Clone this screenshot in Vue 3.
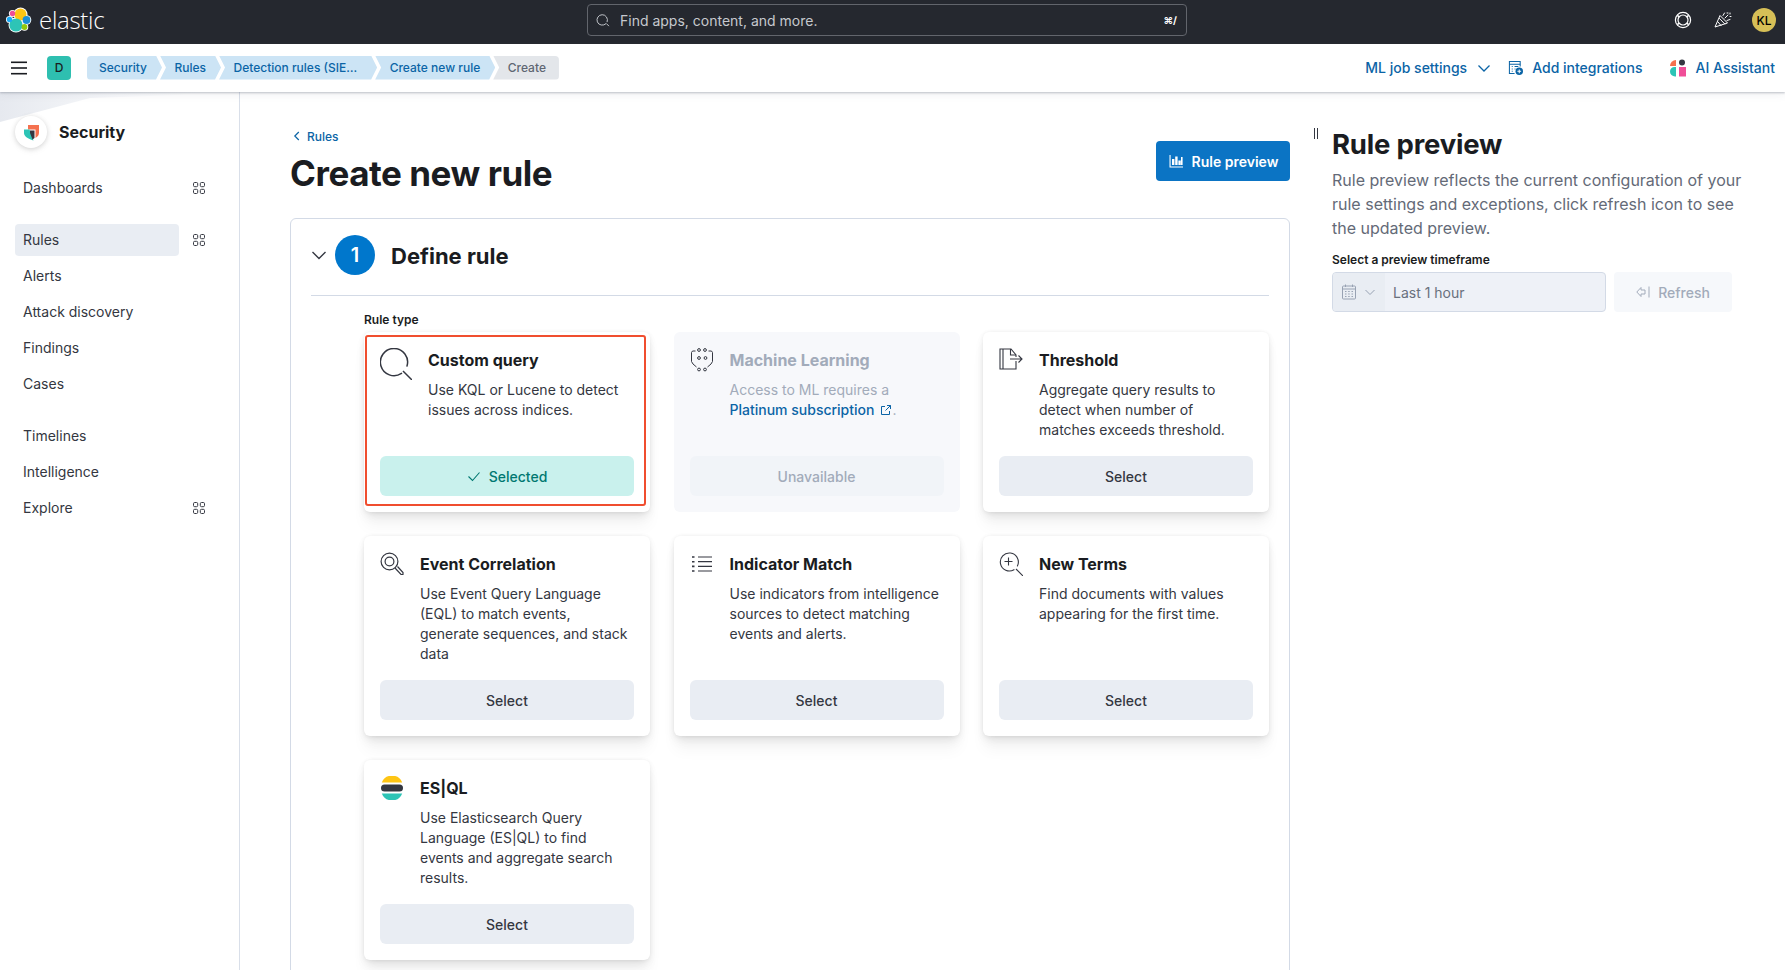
<script setup>
const crumbs = [
  { label: 'Security' },
  { label: 'Rules' },
  { label: 'Detection rules (SIE…', wide: true },
  { label: 'Create new rule' },
  { label: 'Create', last: true },
]
const navTop = [{ label: 'Dashboards', grid: true, cls: 'gapped' }, { label: 'Rules', grid: true, active: true }]
const navMid = ['Alerts', 'Attack discovery', 'Findings', 'Cases']
const navBottom = [{ label: 'Timelines' }, { label: 'Intelligence' }, { label: 'Explore', grid: true }]
const row2 = [
  { key: 'eql', title: 'Event Correlation', desc: 'Use Event Query Language (EQL) to match events, generate sequences, and stack data' },
  { key: 'indicator', title: 'Indicator Match', desc: 'Use indicators from intelligence sources to detect matching events and alerts.' },
  { key: 'terms', title: 'New Terms', desc: 'Find documents with values appearing for the first time.' },
]
</script>

<template>
  <div class="app">
    <header class="topbar">
      <div class="brand">
        <svg class="logo" width="26" height="26" viewBox="0 0 26 26">
          <g fill="#fff">
            <circle cx="14.5" cy="7.5" r="7" /><circle cx="10" cy="18" r="7.5" /><circle cx="6.5" cy="6.5" r="3.6" />
            <circle cx="20.5" cy="13" r="4.8" /><circle cx="3.5" cy="12.5" r="3.6" /><circle cx="18.5" cy="20" r="3.8" />
          </g>
          <circle cx="14.5" cy="7.5" r="6" fill="#fec514" />
          <circle cx="10" cy="18" r="6.6" fill="#2dc4b6" />
          <circle cx="6.5" cy="6.5" r="2.7" fill="#f04e98" />
          <circle cx="20.5" cy="13" r="3.9" fill="#1b8fd8" />
          <circle cx="3.5" cy="12.5" r="2.7" fill="#1ba9f5" />
          <circle cx="18.5" cy="20" r="2.9" fill="#93c90e" />
        </svg>
        <span class="wordmark">elastic</span>
      </div>
      <div class="search">
        <svg width="14" height="14" viewBox="0 0 16 16" fill="none" stroke="#c6c9ce" stroke-width="1.1">
          <path d="M11.2 12.4A6 6 0 1 1 12.8 10" stroke-linecap="round" /><path d="M11.8 12 14.8 15" />
        </svg>
        <span class="search-text">Find apps, content, and more.</span>
        <span class="shortcut">⌘/</span>
      </div>
      <div class="top-icons">
        <svg width="18" height="18" viewBox="0 0 18 18" fill="none" stroke="#fff" stroke-width="1.2">
          <circle cx="9" cy="9" r="7.6" /><circle cx="9" cy="9" r="5" />
          <path d="M3.4 4.4 5.2 6M14.6 4.4 12.8 6M3.4 13.6 5.2 12M14.6 13.6 12.8 12" stroke-width="1.6" />
        </svg>
        <svg width="18" height="18" viewBox="0 0 18 18" fill="none" stroke="#fff" stroke-width="1">
          <path d="M1 16 6 4.5l7.5 7.5Z" stroke-linejoin="round" />
          <path d="M3.6 10.5 7.4 15M5.2 7.2l5.8 6" />
          <path d="M9 4.5 10.5 2M11 7l3-3M13 9.5l3-1M13 2h1M16 2v1M16 5.5h1" stroke-linecap="round" />
        </svg>
        <span class="avatar">KL</span>
      </div>
    </header>

    <div class="subbar">
      <svg class="burger" width="16" height="14" viewBox="0 0 16 14" fill="#1a1c21">
        <rect y="0.5" width="16" height="1.6" /><rect y="6.2" width="16" height="1.6" /><rect y="11.9" width="16" height="1.6" />
      </svg>
      <span class="space-badge">D</span>
      <nav class="crumbs">
        <span v-for="(c, i) in crumbs" :key="c.label" class="crumb" :class="{ first: i === 0, last: c.last, wide: c.wide }">{{ c.label }}</span>
      </nav>
      <div class="actions">
        <span class="action">ML job settings
          <svg class="after-chevron" width="14" height="14" viewBox="0 0 14 14" fill="none" stroke="#0b64a6" stroke-width="1.3"><path d="M1.5 4.5 7 10l5.5-5.5" /></svg>
        </span>
        <span class="action tight">
          <svg width="15" height="15" viewBox="0 0 16 16" fill="none" stroke="#0b64a6" stroke-width="1.1">
            <path d="M13 7V1.5H1.5v13H7" /><path d="M1.5 4.5H13M4 7h1M7 7h4M4 9.5h1M7 9.5h1M4 12h1" />
            <circle cx="12" cy="12" r="4" fill="#0b64a6" stroke="none" /><path d="M12 10v4M10 12h4" stroke="#fff" />
          </svg>
          Add integrations
        </span>
        <span class="action ai">
          <svg width="16" height="18" viewBox="0 0 16 18">
            <path d="M0 7A6 6 0 0 1 6 1v6Z" fill="#f5714f" />
            <circle cx="12" cy="3.4" r="3" fill="#343741" />
            <path d="M6 8v9.5H5A5 5 0 0 1 0 12.5 4.5 4.5 0 0 1 4.5 8Z" fill="#2dc4b6" />
            <rect x="9" y="8" width="7" height="9.5" fill="#f04e98" />
          </svg>
          AI Assistant
        </span>
      </div>
    </div>

    <div class="body">
      <aside class="sidebar">
        <div class="wedge"></div>
        <div class="solution">
          <span class="solution-logo">
            <svg width="15" height="17" viewBox="0 0 15 17">
              <path d="M4 1H15v7.5c0 2.5-1 4-3.5 5.5V5.5H4Z" fill="#f5714f" />
              <path d="M0 5.5h5.5L9.5 16.5c-.5 0-1-.2-1.6-.5C3 14 0 12 0 9Z" fill="#2dc4b6" />
              <path d="M6 6.5h4.5v7.5l-2 1.5L6 9Z" fill="#343741" />
            </svg>
          </span>
          <span class="solution-name">Security</span>
        </div>
        <div v-for="item in navTop" :key="item.label" class="nav-row" :class="item.cls">
          <span class="nav-item" :class="{ active: item.active }">{{ item.label }}</span>
          <svg class="grid-icon" width="12" height="12" viewBox="0 0 12 12" fill="none" stroke="#343741" stroke-width="1">
            <rect x=".5" y=".5" width="4.2" height="4.2" rx="1.2" /><rect x="7.3" y=".5" width="4.2" height="4.2" rx="1.2" />
            <rect x=".5" y="7.3" width="4.2" height="4.2" rx="1.2" /><rect x="7.3" y="7.3" width="4.2" height="4.2" rx="1.2" />
          </svg>
        </div>
        <div v-for="label in navMid" :key="label" class="nav-row"><span class="nav-item">{{ label }}</span></div>
        <div class="nav-spacer"></div>
        <div v-for="item in navBottom" :key="item.label" class="nav-row">
          <span class="nav-item">{{ item.label }}</span>
          <svg v-if="item.grid" class="grid-icon" width="12" height="12" viewBox="0 0 12 12" fill="none" stroke="#343741" stroke-width="1">
            <rect x=".5" y=".5" width="4.2" height="4.2" rx="1.2" /><rect x="7.3" y=".5" width="4.2" height="4.2" rx="1.2" />
            <rect x=".5" y="7.3" width="4.2" height="4.2" rx="1.2" /><rect x="7.3" y="7.3" width="4.2" height="4.2" rx="1.2" />
          </svg>
        </div>
      </aside>

      <main class="main">
        <div class="page-head">
          <div>
            <a class="back">
              <svg width="12" height="12" viewBox="0 0 12 12" fill="none" stroke="#0b64a6" stroke-width="1.2"><path d="M7.8 2 3.8 6l4 4" /></svg>
              Rules
            </a>
            <h1 class="page-title">Create new rule</h1>
          </div>
          <button class="preview-btn">
            <svg width="16" height="16" viewBox="0 0 16 16" fill="#fff">
              <path d="M1.5 2v12.5H15v-1.1H2.6V2Z" /><rect x="4" y="6" width="2.4" height="6" /><rect x="7.2" y="3.5" width="2.4" height="8.5" />
              <rect x="10.4" y="7.5" width="2.4" height="4.5" /><rect x="13" y="4" width="1.6" height="8" />
            </svg>
            Rule preview
          </button>
        </div>

        <section class="panel">
          <div class="step-head">
            <svg width="16" height="16" viewBox="0 0 16 16" fill="none" stroke="#343741" stroke-width="1.4"><path d="M1.5 5 8 11.5 14.5 5" /></svg>
            <span class="step-num">1</span>
            <h2 class="step-title">Define rule</h2>
          </div>
          <div class="step-body">
            <div class="field-label">Rule type</div>
            <div class="cards">
              <article class="card">
                <div class="card-main">
                  <svg class="icon-l" width="32" height="32" viewBox="0 0 32 32" fill="none" stroke="#343741" stroke-width="1.5">
                    <path d="M21.5 25.4A13.6 13.6 0 1 1 27 18" stroke-linecap="round" /><path d="M23 23 32 32" />
                  </svg>
                  <div class="card-copy">
                    <h3 class="card-title">Custom query</h3>
                    <p class="card-desc">Use KQL or Lucene to detect issues across indices.</p>
                  </div>
                </div>
                <div class="card-btn selected">
                  <svg width="14" height="14" viewBox="0 0 14 14" fill="none" stroke="#007871" stroke-width="1.1"><path d="M1.5 7.5 5.5 11.5 12.5 3.5" /></svg>
                  Selected
                </div>
                <span class="annotation"></span>
              </article>

              <article class="card disabled">
                <div class="card-main">
                  <svg width="24" height="24" viewBox="0 0 24 24" fill="none" stroke="#343741" stroke-width="1">
                    <circle cx="9" cy="2" r="1.4" /><circle cx="15" cy="2" r="1.4" /><circle cx="9" cy="10" r="1.4" /><circle cx="15.5" cy="10" r="1.4" />
                    <circle cx="9" cy="21.5" r="1.4" /><circle cx="15" cy="21.5" r="1.4" />
                    <path d="M5.5 3H2.5L1.5 4.5v9L3 16l3.5 3M18.5 3h3l1 1.5v9L21 16l-3.5 3" />
                  </svg>
                  <div class="card-copy">
                    <h3 class="card-title">Machine Learning</h3>
                    <p class="card-desc">Access to ML requires a <a class="link">Platinum subscription<svg class="ext" width="12" height="12" viewBox="0 0 12 12" fill="none" stroke="#0b64a6" stroke-width="1"><path d="M5 2.5H1.5v8h8V7M7 1.5h3.5V5M10.5 1.5 5.5 6.5" /></svg></a>.</p>
                  </div>
                </div>
                <div class="card-btn unavailable">Unavailable</div>
              </article>

              <article class="card">
                <div class="card-main">
                  <svg width="24" height="24" viewBox="0 0 24 24" fill="none" stroke="#343741" stroke-width="1.1">
                    <path d="M17 13v8H1V1h11l5 6v2" /><path d="M4 1v20M11.5 1v6H17" /><path d="M11 11h12M19.5 7.5 23 11l-3.5 3.5" />
                  </svg>
                  <div class="card-copy">
                    <h3 class="card-title">Threshold</h3>
                    <p class="card-desc">Aggregate query results to detect when number of matches exceeds threshold.</p>
                  </div>
                </div>
                <div class="card-btn">Select</div>
              </article>

              <article v-for="c in row2" :key="c.key" class="card">
                <div class="card-main">
                  <svg v-if="c.key === 'eql'" width="24" height="24" viewBox="0 0 24 24" fill="none" stroke="#343741" stroke-width="1.2">
                    <circle cx="9.5" cy="9.5" r="8.4" /><circle cx="9.5" cy="9.5" r="4.4" />
                    <path d="M15 16 21 22.5H23.5M17.5 14.5 23 20.5v2" />
                  </svg>
                  <svg v-else-if="c.key === 'indicator'" width="24" height="24" viewBox="0 0 24 24" fill="none" stroke="#343741" stroke-width="1.2">
                    <path d="M8 5h14M8 9.7h14M8 14.4h14M8 19h14" />
                    <path d="M2 5h2.5M2 9.7h2.5M2 14.4h2.5M2 19h2.5" stroke-width="1.6" />
                  </svg>
                  <svg v-else width="24" height="24" viewBox="0 0 24 24" fill="none" stroke="#343741" stroke-width="1.1">
                    <path d="M15 17.7A9 9 0 1 1 18.4 14" stroke-linecap="round" /><path d="M17 17l7 7M9.5 5.5v8M5.5 9.5h8" />
                  </svg>
                  <div class="card-copy">
                    <h3 class="card-title">{{ c.title }}</h3>
                    <p class="card-desc">{{ c.desc }}</p>
                  </div>
                </div>
                <div class="card-btn">Select</div>
              </article>

              <article class="card">
                <div class="card-main">
                  <svg width="24" height="24" viewBox="0 0 24 24">
                    <path d="M1.8 6.5A11 11 0 0 1 22.2 6.5Z" fill="#fec514" />
                    <rect x="1" y="8.5" width="22" height="7" rx="3.5" fill="#343741" />
                    <path d="M1.8 17.5h20.4a11 11 0 0 1-20.4 0Z" fill="#2dc4b6" />
                  </svg>
                  <div class="card-copy">
                    <h3 class="card-title">ES|QL</h3>
                    <p class="card-desc">Use Elasticsearch Query Language (ES|QL) to find events and aggregate search results.</p>
                  </div>
                </div>
                <div class="card-btn">Select</div>
              </article>
            </div>
          </div>
        </section>
      </main>

      <aside class="preview">
        <span class="handle"></span>
        <h2 class="preview-title">Rule preview</h2>
        <p class="preview-desc">Rule preview reflects the current configuration of your rule settings and exceptions, click refresh icon to see the updated preview.</p>
        <div class="preview-label">Select a preview timeframe</div>
        <div class="preview-controls">
          <div class="timeframe">
            <span class="prepend">
              <svg width="14" height="16" viewBox="0 0 14 16" fill="none" stroke="#98a2b3" stroke-width="1">
                <rect x=".5" y="2" width="13" height="13" rx="1" /><path d="M.5 5h13M3.5 .5V3M10.5 .5V3" />
                <path d="M3 7.5h1.5M6.2 7.5h1.5M9.5 7.5H11M3 10h1.5M6.2 10h1.5M9.5 10H11M3 12.5h1.5M6.2 12.5h1.5M9.5 12.5H11" />
              </svg>
              <svg width="12" height="12" viewBox="0 0 12 12" fill="none" stroke="#98a2b3" stroke-width="1"><path d="M1.5 4 6 8.5 10.5 4" /></svg>
            </span>
            <span class="timeframe-value">Last 1 hour</span>
          </div>
          <div class="refresh">
            <svg width="14" height="12" viewBox="0 0 14 12" fill="none" stroke="#a2abba" stroke-width="1">
              <path d="M9 4H5V1.5L.8 6 5 10.5V8h4ZM13 .5v11" />
            </svg>
            Refresh
          </div>
        </div>
      </aside>
    </div>
  </div>
</template>

<style>
html, body { margin: 0; overflow: hidden; background: #fff; }
</style>

<style scoped>
.app { height: 970px; width: 1785px; display: flex; flex-direction: column; overflow: hidden; font-family: Inter, "Liberation Sans", sans-serif; color: #343741; }

.topbar { height: 44px; flex: none; background: #25282f; display: flex; align-items: center; position: relative; }
.brand { display: flex; align-items: center; width: 587px; margin-top: -4px; padding-left: 6px; box-sizing: border-box; }
.wordmark { margin-left: 7px; color: #fff; font-family: "Open Sans", sans-serif; font-weight: 300; font-size: 24px; line-height: 28px; letter-spacing: -0.3px; }
.search { width: 600px; height: 32px; box-sizing: border-box; margin-top: -4px; border: 1px solid #62656c; border-radius: 4px; display: flex; align-items: center; padding: 0 9px 0 8px; color: #c6c9ce; font-size: 14px; }
.search-text { margin-left: 10px; flex: 1; }
.shortcut { color: #fff; font-size: 10px; font-weight: 700; }
.top-icons { margin-left: auto; margin-top: -4px; display: flex; align-items: center; padding-right: 9px; gap: 22px; }
.avatar { width: 24px; height: 24px; margin-left: -2px; border-radius: 50%; background: #d6bf57; color: #000; font-size: 12px; font-weight: 500; display: flex; align-items: center; justify-content: center; }

.subbar { height: 48px; box-sizing: border-box; padding-bottom: 1px; flex: none; background: #fff; display: flex; align-items: center; box-shadow: 0 1px 2px rgba(80, 90, 110, .35), 0 3px 8px rgba(80, 90, 110, .08); position: relative; z-index: 2; }
.burger { margin-left: 11px; }
.space-badge { margin-left: 20px; width: 24px; height: 24px; border-radius: 4px; background: #2ebfb0; color: #1a1c21; font-size: 12px; font-weight: 500; display: flex; align-items: center; justify-content: center; }
.crumbs { margin-left: 16px; display: flex; height: 24px; }
.crumb { display: flex; align-items: center; padding: 0 15px 0 14.5px; margin-left: -2px; background: #cce4f5; color: #0b64a6; font-size: 12px; font-weight: 500; clip-path: polygon(0 0, calc(100% - 6px) 0, 100% 50%, calc(100% - 6px) 100%, 0 100%, 6px 50%); }
.crumb.wide { padding-right: 20px; }
.crumb.first { margin-left: 0; padding-left: 12px; border-radius: 4px 0 0 4px; clip-path: polygon(0 0, calc(100% - 6px) 0, 100% 50%, calc(100% - 6px) 100%, 0 100%); }
.crumb.last { background: #e3e6ea; color: #5f6672; padding-right: 13px; border-radius: 0 4px 4px 0; clip-path: polygon(0 0, 100% 0, 100% 100%, 0 100%, 6px 50%); }
.actions { margin-left: auto; display: flex; align-items: center; padding-right: 10px; color: #0b64a6; font-size: 14px; font-weight: 500; }
.action { display: flex; align-items: center; gap: 10px; }
.action + .action { margin-left: 17px; }
.action.tight { gap: 9px; }
.action.ai { margin-left: 27px; }
.after-chevron { margin-left: 0; }

.body { flex: 1; min-height: 0; display: flex; }
.sidebar { width: 240px; flex: none; box-sizing: border-box; border-right: 1px solid #d9dfe9; padding: 24px 0 0 15px; position: relative; background: #fff; }
.wedge { position: absolute; left: 0; top: 0; width: 200px; height: 34px; background: linear-gradient(90deg, #e6e9ef, #f8f9fb 60%, #fff); clip-path: polygon(0 0, 100% 0, 90% 3px, 45% 6px, 0 30px); }
.solution { display: flex; align-items: center; height: 32px; position: relative; }
.solution-logo { width: 32px; height: 32px; border-radius: 50%; background: #fff; box-shadow: 0 1px 5px rgba(0, 0, 0, .14), 0 2px 8px rgba(0, 0, 0, .05); display: flex; align-items: center; justify-content: center; }
.solution-name { margin-left: 12px; font-size: 16px; font-weight: 700; color: #1a1c21; }
.nav-row { display: flex; align-items: center; height: 32px; margin-top: 4px; position: relative; }
.nav-row.gapped { margin-top: 24px; margin-bottom: 20px; }
.nav-item { width: 164px; height: 32px; box-sizing: border-box; padding-left: 8px; line-height: 32px; font-size: 14px; border-radius: 4px; color: #343741; }
.nav-item.active { background: #e9edf3; }
.grid-icon { margin-left: 14px; }
.nav-spacer { height: 16px; }

.main { width: 1050px; flex: none; box-sizing: border-box; padding: 0 0 0 50px; }
.page-head { display: flex; justify-content: space-between; align-items: flex-start; height: 126px; }
.back { display: flex; align-items: center; gap: 4px; margin: 36px 0 0 1px; height: 16px; color: #0b64a6; font-size: 12px; font-weight: 500; }
.page-title { margin: 7px 0 0; font-size: 35px; line-height: 44px; font-weight: 700; color: #1a1c21; letter-spacing: -0.45px; }
.preview-btn { margin-top: 49px; width: 134px; height: 40px; border: 0; border-radius: 4px; background: #0b74c4; color: #fff; font: 600 14px Inter, sans-serif; display: flex; align-items: center; justify-content: center; gap: 8px; padding: 0; }
.panel { height: 800px; box-sizing: border-box; border: 1px solid #d3dae6; border-radius: 6px; padding: 16px 20px 0 20px; background: #fff; }
.step-head { display: flex; align-items: center; height: 40px; padding-bottom: 20px; border-bottom: 1px solid #d3dae6; }
.step-num { margin-left: 8px; width: 40px; height: 40px; border-radius: 50%; background: #0077cc; color: #fff; font-size: 20px; font-weight: 600; display: flex; align-items: center; justify-content: center; }
.step-title { margin: 0 0 0 16px; font-size: 22px; line-height: 32px; font-weight: 700; color: #1a1c21; position: relative; top: 1px; }
.step-body { padding: 17px 0 0 53px; }
.field-label { font-size: 12px; line-height: 14px; font-weight: 600; color: #1a1c21; margin-bottom: 5px; }
.cards { display: grid; grid-template-columns: repeat(3, 286px); column-gap: 23.5px; row-gap: 24px; }
.card { position: relative; box-sizing: border-box; padding: 16px; border-radius: 6px; background: #fff; display: flex; flex-direction: column; box-shadow: 0 .9px 4px -1px rgba(0, 0, 0, .08), 0 2.6px 8px -1px rgba(0, 0, 0, .06), 0 5.7px 12px -1px rgba(0, 0, 0, .05), 0 15px 15px -1px rgba(0, 0, 0, .04); }
.card.disabled { background: #f7f8fb; box-shadow: none; }
.card-main { display: flex; gap: 16px; flex: 1; }
.card-copy { flex: 1; min-width: 0; padding-right: 3px; }
.card-title { margin: 0 0 8px; font-size: 16px; line-height: 24px; font-weight: 700; color: #1a1c21; }
.card-desc { margin: 0; font-size: 14px; line-height: 20px; color: #343741; }
.disabled .card-title { color: #a2abba; }
.disabled .card-desc { color: #a2abba; }
.link { color: #0b64a6; font-weight: 500; }
.ext { margin-left: 6px; vertical-align: -1px; }
.card-btn { margin-top: 16px; height: 40px; border-radius: 6px; background: #e9edf3; color: #343741; font-size: 14px; font-weight: 500; display: flex; align-items: center; justify-content: center; gap: 8px; flex: none; }
.card-btn.selected { background: #c9f1ed; color: #007871; }
.card-btn.unavailable { background: #f1f4f8; color: #a2abba; }
.annotation { position: absolute; left: 1px; top: 3px; right: 4px; bottom: 6px; border: 2px solid #f04e2f; border-radius: 3px; pointer-events: none; }

.preview { position: relative; flex: 1; padding: 0 0 0 42px; min-width: 0; }
.handle { position: absolute; left: 24px; top: 36px; width: 2px; height: 11px; border-left: 1px solid #343741; border-right: 1px solid #343741; }
.preview-title { margin: 32px 0 0; font-size: 27.5px; line-height: 40px; font-weight: 700; color: #1a1c21; letter-spacing: -0.2px; }
.preview-desc { margin: 4px 0 0; width: 420px; font-size: 16px; line-height: 24px; color: #646a77; }
.preview-label { margin-top: 10px; font-size: 12px; line-height: 20px; font-weight: 600; color: #1a1c21; }
.preview-controls { display: flex; gap: 8px; margin-top: 2px; }
.timeframe { width: 274px; height: 40px; box-sizing: border-box; border: 1px solid #d3dae6; border-radius: 4px; background: #eef1f7; display: flex; align-items: center; overflow: hidden; }
.prepend { width: 52px; height: 100%; background: #e9edf3; display: flex; align-items: center; justify-content: center; gap: 8px; flex: none; }
.timeframe-value { margin-left: 8px; font-size: 14px; color: #69707d; }
.refresh { width: 118px; height: 40px; border-radius: 4px; background: #f6f8fb; color: #a2abba; font-size: 14px; font-weight: 500; display: flex; align-items: center; justify-content: center; gap: 8px; }
</style>
